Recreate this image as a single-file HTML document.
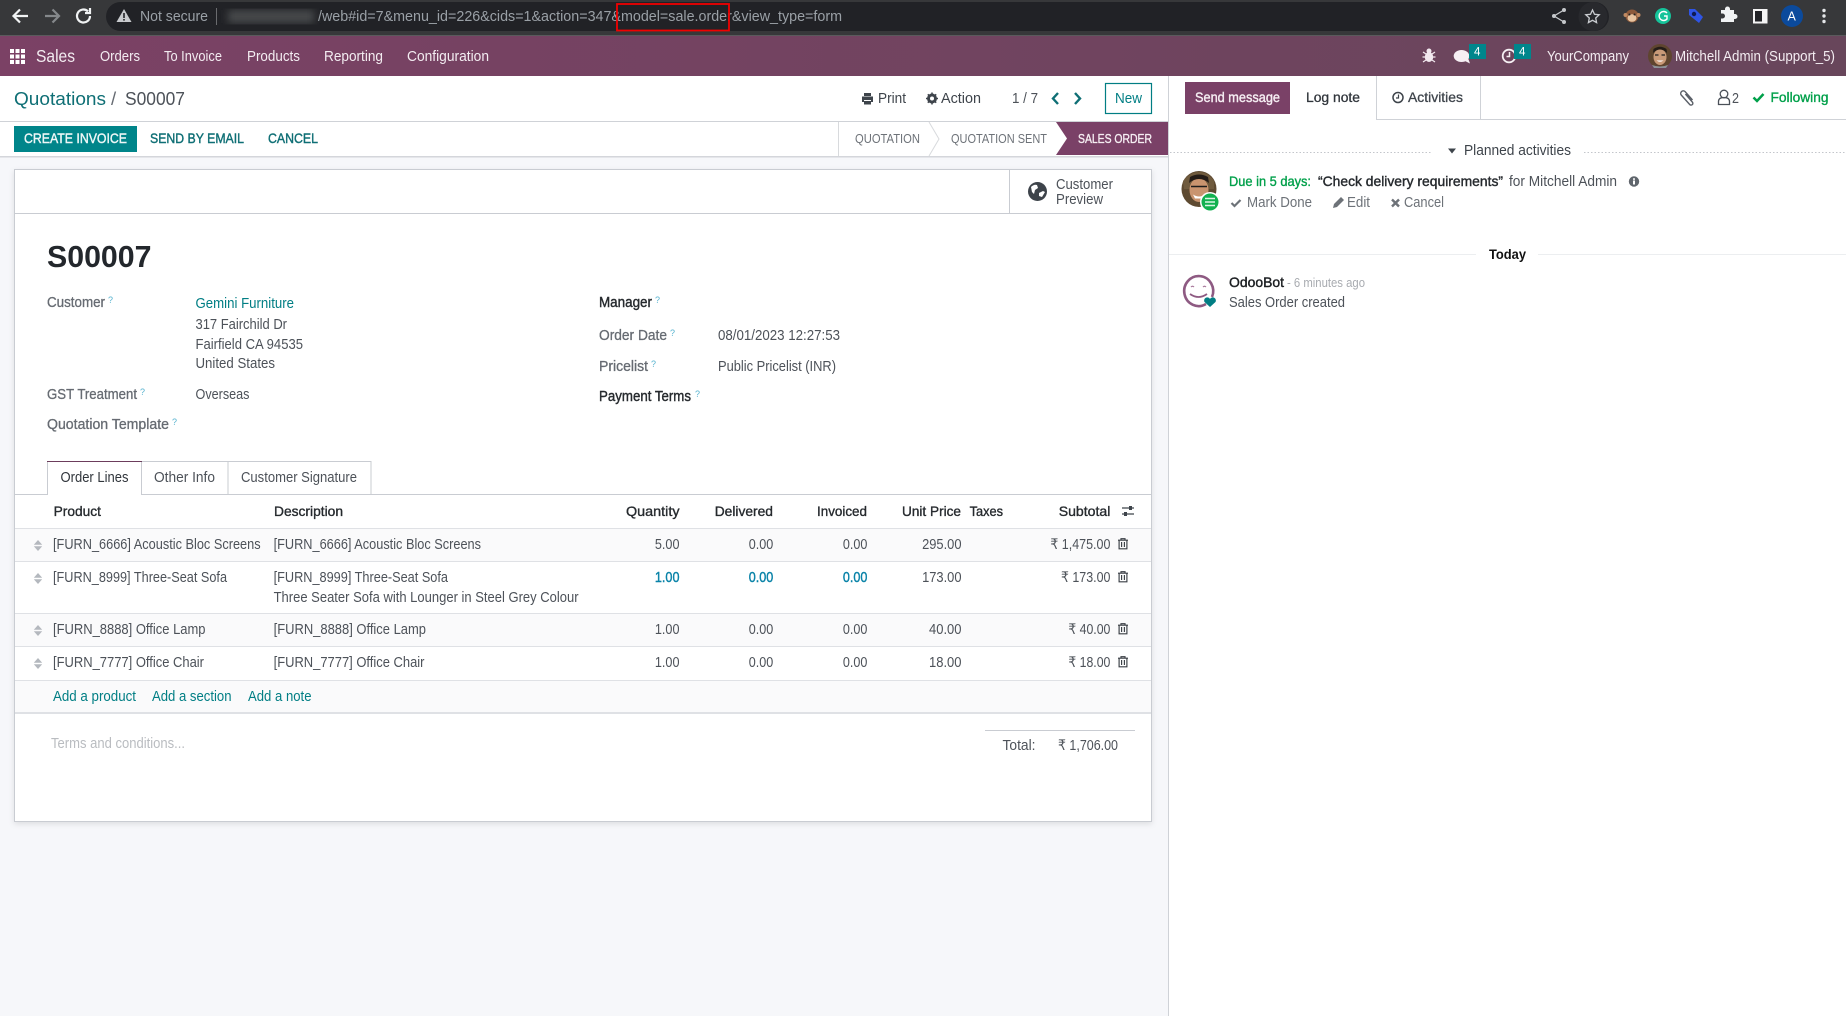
<!DOCTYPE html>
<html lang="en"><head><meta charset="utf-8"><title>S00007 - Odoo</title>
<style>
html,body{margin:0;padding:0;background:#fff;width:1846px;height:1016px;overflow:hidden}
svg{display:block}
text{font-family:"Liberation Sans",sans-serif;font-size:14.5px;fill:#4d5259;white-space:pre}
.b{fill:#262a2e;stroke:#262a2e;stroke-width:.4px}
.l{fill:#666b72;stroke:#666b72;stroke-width:.3px}
.m{fill:#f3ecf1}
.t{fill:#017e84}
.c{fill:#9aa0a6;font-size:15px}
.q{fill:#57b3cf;font-size:9px}
.h{fill:#262a2e;stroke:#262a2e;stroke-width:.35px;font-size:14px}
.md{font-size:14px;stroke-width:.4px}
</style></head><body>
<svg xmlns="http://www.w3.org/2000/svg" width="1846" height="1016" viewBox="0 0 1846 1016">
<defs>
<linearGradient id="nav" x1="0" x2="1" y1="0" y2="0"><stop offset="0" stop-color="#7b4165"/><stop offset="1" stop-color="#68465b"/></linearGradient>
<filter id="bl"><feGaussianBlur stdDeviation="4"/></filter>
<g id="tr"><path d="M-5-3.800h10M-2-3.800v-1.500h4v1.500M-3.900-3.800v8.600h7.800v-8.600M-1.400-2v5M1.400-2v5" fill="none" stroke="#3a3f45" stroke-width="1.150"/></g>
<g id="hn"><path d="M-4.200-.7L0-5.500 4.200-.7zM-4.200.7L0 5.500 4.200.7z" fill="#b4b8be"/></g>
</defs>

<!-- page backgrounds -->
<rect width="1846" height="1016" fill="#fff"/>
<rect x="0" y="157" width="1168" height="859" fill="#f6f7fa"/>

<!-- browser chrome -->
<rect width="1846" height="36" fill="#37383a"/>
<rect y="35" width="1846" height="1" fill="#5a5a5c"/>
<rect x="106" y="2" width="1503" height="29" rx="14.500" fill="#212226"/>
<circle cx="1593" cy="16.500" r="14.500" fill="#28292d"/>
<path d="M28 16H14M20 9.500L13.500 16l6.500 6.500" fill="none" stroke="#f1f3f4" stroke-width="2.200"/>
<path d="M59 16H45M52.500 9.500L59 16l-6.500 6.500" fill="none" stroke="#85888b" stroke-width="2.200"/>
<path d="M90 16a6.500 6.500 0 1 1-2-4.700M90 8v5h-5" fill="none" stroke="#f1f3f4" stroke-width="2.200"/>
<path d="M124 9l7.500 13h-15z" fill="#c8cacd"/><rect x="123.200" y="13" width="1.600" height="5" fill="#212226"/><rect x="123.200" y="19" width="1.600" height="1.600" fill="#212226"/>
<text class="c" x="140" y="21" textLength="68" lengthAdjust="spacingAndGlyphs">Not secure</text>
<rect x="216" y="8" width="1" height="17" fill="#6a6b6e"/>
<rect x="228" y="10" width="86" height="13" fill="#47484c" filter="url(#bl)"/>
<text class="c" x="318" y="21" textLength="524" lengthAdjust="spacingAndGlyphs">/web#id=7&amp;menu_id=226&amp;cids=1&amp;action=347&amp;model=sale.order&amp;view_type=form</text>
<rect x="617" y="4" width="112" height="26.500" fill="none" stroke="#f00000" stroke-width="1.800"/>
<!-- chrome right icons -->
<g fill="none" stroke="#c4c7ca" stroke-width="1.300"><path d="M1564 10l-10 6 10 6"/></g>
<circle cx="1564" cy="10" r="2" fill="#c4c7ca"/><circle cx="1554" cy="16" r="2" fill="#c4c7ca"/><circle cx="1564" cy="22" r="2" fill="#c4c7ca"/>
<path d="M1592.500 10l2 4.300 4.700.5-3.500 3.200.9 4.600-4.100-2.300-4.100 2.300.9-4.600-3.500-3.200 4.700-.5z" fill="none" stroke="#c9ccd0" stroke-width="1.300"/>
<circle cx="1632" cy="16" r="6.500" fill="#8d5a3b"/><circle cx="1625.500" cy="15" r="2" fill="#c08a62"/><circle cx="1638.500" cy="15" r="2" fill="#c08a62"/><ellipse cx="1632" cy="18" rx="4.500" ry="3.800" fill="#e8c4a0"/><circle cx="1629.500" cy="14.500" r="1" fill="#222"/><circle cx="1634.500" cy="14.500" r="1" fill="#222"/>
<circle cx="1663" cy="16" r="8" fill="#15c39a"/><path d="M1667 13a4.500 4.500 0 1 0 0 6v-3h-3" fill="none" stroke="#fff" stroke-width="1.400"/>
<path d="M1689 9h6l8 8-4 6-10-8z" fill="#2f55e6"/><circle cx="1694" cy="14" r="2.200" fill="#0d1b55"/>
<path d="M1721 13h4v-1a2.500 2.500 0 0 1 5 0v1h4v4h1a2.500 2.500 0 0 1 0 5h-1v3h-13v-3.500h1.500a2.500 2.500 0 0 0 0-5H1721z" fill="#f1f3f4" transform="translate(0 -3)"/>
<rect x="1754" y="10" width="12.500" height="12.500" fill="#212226" stroke="#f4f4f4" stroke-width="2"/><rect x="1762" y="9" width="5.500" height="14.500" fill="#f4f4f4"/>
<circle cx="1792" cy="16" r="11" fill="#0b4a9c"/><text x="1787.500" y="20.500" style="fill:#fff;font-size:12.500px">A</text>
<circle cx="1824" cy="10.500" r="1.700" fill="#e5e7e9"/><circle cx="1824" cy="16" r="1.700" fill="#e5e7e9"/><circle cx="1824" cy="21.500" r="1.700" fill="#e5e7e9"/>

<!-- navbar -->
<rect y="36" width="1846" height="40" fill="url(#nav)"/>
<g fill="#fff"><rect x="10" y="49" width="4" height="4"/><rect x="15.500" y="49" width="4" height="4"/><rect x="21" y="49" width="4" height="4"/><rect x="10" y="54.500" width="4" height="4"/><rect x="15.500" y="54.500" width="4" height="4"/><rect x="21" y="54.500" width="4" height="4"/><rect x="10" y="60" width="4" height="4"/><rect x="15.500" y="60" width="4" height="4"/><rect x="21" y="60" width="4" height="4"/></g>
<text class="m" x="36" y="62" style="font-size:17.500px" textLength="39" lengthAdjust="spacingAndGlyphs">Sales</text>
<text class="m" x="100" y="61" textLength="40" lengthAdjust="spacingAndGlyphs">Orders</text>
<text class="m" x="164" y="61" textLength="58" lengthAdjust="spacingAndGlyphs">To Invoice</text>
<text class="m" x="247" y="61" textLength="53" lengthAdjust="spacingAndGlyphs">Products</text>
<text class="m" x="324" y="61" textLength="59" lengthAdjust="spacingAndGlyphs">Reporting</text>
<text class="m" x="407" y="61" textLength="82" lengthAdjust="spacingAndGlyphs">Configuration</text>
<!-- bug -->
<ellipse cx="1429" cy="57" rx="4.200" ry="5" fill="#f2e9ef"/><circle cx="1429" cy="51" r="2.500" fill="#f2e9ef"/>
<path d="M1423 52l3 2M1435 52l-3 2M1422.500 57h3M1435.500 57h-3M1423 62l3-2M1435 62l-3-2" stroke="#f2e9ef" stroke-width="1.200"/>
<!-- chat -->
<ellipse cx="1461.500" cy="56" rx="7.800" ry="6" fill="#f6f0f4"/><path d="M1463 60l7 3.500-2-5.500z" fill="#f6f0f4"/>
<rect x="1469" y="44" width="17" height="15" fill="#00868c"/><text x="1474" y="55.500" style="fill:#fff;font-size:11.500px">4</text>
<!-- clock -->
<circle cx="1509" cy="56" r="6.300" fill="none" stroke="#f6f0f4" stroke-width="1.800"/><path d="M1509.500 52v4.500h-3" fill="none" stroke="#f6f0f4" stroke-width="1.500"/>
<rect x="1514" y="44" width="17" height="15" fill="#00868c"/><text x="1519" y="55.500" style="fill:#fff;font-size:11.500px">4</text>
<text class="m" x="1547" y="61" textLength="82" lengthAdjust="spacingAndGlyphs">YourCompany</text>
<!-- nav avatar -->
<circle cx="1660" cy="56" r="12" fill="#5f452f"/><ellipse cx="1660" cy="57" rx="6.500" ry="8" fill="#c99a78"/><path d="M1653 53q7-7 14 0l-.5-4q-6.500-4.500-13 0z" fill="#241c17"/><path d="M1655 55h3.500M1661.500 55h3.500" stroke="#222" stroke-width="1.300"/><path d="M1656.500 60.500q3.500 2.500 7 0" fill="#fff"/><path d="M1652 65q8 3 16 0l-2 3h-12z" fill="#8d9298"/>
<text class="m" x="1675" y="61" textLength="160" lengthAdjust="spacingAndGlyphs">Mitchell Admin (Support_5)</text>

<!-- control panel left -->
<rect y="121" width="1168" height="1" fill="#cfd2d7"/>
<text class="t" x="14" y="105" style="font-size:18.500px;fill:#0f6f75" textLength="92" lengthAdjust="spacingAndGlyphs">Quotations</text>
<text x="111" y="105" style="font-size:18.500px;fill:#666b72">/</text>
<text x="125" y="105" style="font-size:18.500px" textLength="60" lengthAdjust="spacingAndGlyphs">S00007</text>
<path d="M864 93h7v3h-7zM862 96.500h11v5.500h-2v-2h-7v2h-2zM864 101h7v3.500h-7z" fill="#3e444b"/>
<text x="878" y="103" style="fill:#3e444b" textLength="28" lengthAdjust="spacingAndGlyphs">Print</text>
<circle cx="932" cy="98.500" r="3.500" fill="none" stroke="#3e444b" stroke-width="3"/><path d="M932 92.500v2.500M932 102v2.500M926 98.500h2.500M935.500 98.500h2.500M927.800 94.300l1.700 1.700M934.500 101l1.700 1.700M936.200 94.300l-1.700 1.700M929.500 101l-1.700 1.700" stroke="#3e444b" stroke-width="1.500"/>
<text x="941" y="103" style="fill:#3e444b" textLength="40" lengthAdjust="spacingAndGlyphs">Action</text>
<text x="1012" y="103" textLength="26" lengthAdjust="spacingAndGlyphs">1 / 7</text>
<path d="M1058 93l-5 5.500 5 5.500" fill="none" stroke="#0f6f75" stroke-width="2.400"/>
<path d="M1075 93l5 5.500-5 5.500" fill="none" stroke="#0f6f75" stroke-width="2.400"/>
<rect x="1105.500" y="83.500" width="46" height="30" fill="#fff" stroke="#017e84" stroke-width="1.200"/>
<text class="t" x="1115" y="103" textLength="27" lengthAdjust="spacingAndGlyphs">New</text>

<!-- status bar -->
<rect y="156" width="1168" height="1.500" fill="#d4d6db"/>
<rect x="14" y="126" width="123" height="26" fill="#00858a"/>
<text x="24" y="143" style="font-size:13.500px;fill:#eef7f7;stroke:#eef7f7;stroke-width:.4px" textLength="103" lengthAdjust="spacingAndGlyphs">CREATE INVOICE</text>
<text x="150" y="143" style="font-size:13.500px;fill:#0f6f75;stroke:#0f6f75;stroke-width:.4px" textLength="94" lengthAdjust="spacingAndGlyphs">SEND BY EMAIL</text>
<text x="268" y="143" style="font-size:13.500px;fill:#0f6f75;stroke:#0f6f75;stroke-width:.4px" textLength="50" lengthAdjust="spacingAndGlyphs">CANCEL</text>
<rect x="838" y="122" width="1" height="34" fill="#d8dadd"/>
<text x="855" y="143" style="font-size:13px;fill:#6d7278" textLength="65" lengthAdjust="spacingAndGlyphs">QUOTATION</text>
<path d="M929 122l10 17-10 17" fill="none" stroke="#d8dadd"/>
<text x="951" y="143" style="font-size:13px;fill:#6d7278" textLength="96" lengthAdjust="spacingAndGlyphs">QUOTATION SENT</text>
<path d="M1056 122h112v33h-112l11-16.500z" fill="#7a4167"/>
<text x="1078" y="143" style="font-size:13px;fill:#f6eef3;stroke:#f6eef3;stroke-width:.35px" textLength="74" lengthAdjust="spacingAndGlyphs">SALES ORDER</text>

<!-- sheet -->
<rect x="14.500" y="169.500" width="1137" height="652" fill="#fff" stroke="#c9ccd2" style="filter:drop-shadow(0 2px 3px rgba(0,0,0,.10))"/>
<rect x="15" y="213" width="1136" height="1" fill="#c9ccd2"/>
<rect x="1009" y="170" width="1" height="43" fill="#c9ccd2"/>
<circle cx="1037.500" cy="191.500" r="9.500" fill="#3d434a"/>
<path d="M1031 187q3-3 6-2l1 3-3 2-1 4-2-2zM1039 193l4-2 2 1-3 5-3-1z" fill="#fff"/>
<text x="1056" y="189" textLength="57" lengthAdjust="spacingAndGlyphs">Customer</text>
<text x="1056" y="204" textLength="47" lengthAdjust="spacingAndGlyphs">Preview</text>

<text x="47" y="267" style="font-size:31px;font-weight:700;fill:#23272c" textLength="104.500" lengthAdjust="spacingAndGlyphs">S00007</text>

<text class="l" x="47" y="307" textLength="58" lengthAdjust="spacingAndGlyphs">Customer</text><text class="q" x="108" y="303">?</text>
<text class="t" x="195.500" y="308" textLength="98.500" lengthAdjust="spacingAndGlyphs">Gemini Furniture</text>
<text x="195.500" y="329" textLength="91.500" lengthAdjust="spacingAndGlyphs">317 Fairchild Dr</text>
<text x="195.500" y="349" textLength="107.500" lengthAdjust="spacingAndGlyphs">Fairfield CA 94535</text>
<text x="195.500" y="368" textLength="79.500" lengthAdjust="spacingAndGlyphs">United States</text>
<text class="l" x="47" y="399" textLength="90" lengthAdjust="spacingAndGlyphs">GST Treatment</text><text class="q" x="140" y="395">?</text>
<text x="195.500" y="399" textLength="54" lengthAdjust="spacingAndGlyphs">Overseas</text>
<text class="l" x="47" y="429" textLength="122" lengthAdjust="spacingAndGlyphs">Quotation Template</text><text class="q" x="172" y="425">?</text>

<text class="b" x="599" y="307" textLength="53" lengthAdjust="spacingAndGlyphs">Manager</text><text class="q" x="655" y="303">?</text>
<text class="l" x="599" y="340" textLength="68" lengthAdjust="spacingAndGlyphs">Order Date</text><text class="q" x="670" y="336">?</text>
<text x="718" y="340" textLength="122" lengthAdjust="spacingAndGlyphs">08/01/2023 12:27:53</text>
<text class="l" x="599" y="371" textLength="49" lengthAdjust="spacingAndGlyphs">Pricelist</text><text class="q" x="651" y="367">?</text>
<text x="718" y="371" textLength="118" lengthAdjust="spacingAndGlyphs">Public Pricelist (INR)</text>
<text class="b" x="599" y="401" textLength="92" lengthAdjust="spacingAndGlyphs">Payment Terms</text><text class="q" x="695" y="397">?</text>

<!-- tabs -->
<rect x="15" y="494" width="1136" height="1" fill="#c9ccd2"/>
<rect x="141.500" y="461.500" width="86.500" height="33" fill="#fff" stroke="#c9ccd2"/>
<rect x="228" y="461.500" width="143" height="33" fill="#fff" stroke="#c9ccd2"/>
<path d="M47.500 495V461.500H141.500V495" fill="#fff" stroke="#c9ccd2"/>
<rect x="47" y="461" width="95" height="1" fill="#6c3d5c"/>
<text x="60.500" y="482" style="fill:#31363c" textLength="68" lengthAdjust="spacingAndGlyphs">Order Lines</text>
<text x="154" y="482" textLength="61" lengthAdjust="spacingAndGlyphs">Other Info</text>
<text x="241" y="482" textLength="116" lengthAdjust="spacingAndGlyphs">Customer Signature</text>

<!-- table -->
<rect x="15" y="529" width="1136" height="32" fill="#fafafb"/>
<rect x="15" y="614" width="1136" height="32" fill="#fafafb"/>
<rect x="15" y="681" width="1136" height="31" fill="#fafafb"/>
<g fill="#dfe1e5"><rect x="15" y="528" width="1136" height="1"/><rect x="15" y="561" width="1136" height="1"/><rect x="15" y="613" width="1136" height="1"/><rect x="15" y="646" width="1136" height="1"/><rect x="15" y="680" width="1136" height="1"/><rect x="15" y="712" width="1136" height="2"/></g>

<text class="h" x="53.600" y="516" textLength="47.400" lengthAdjust="spacingAndGlyphs">Product</text>
<text class="h" x="274" y="516" textLength="69" lengthAdjust="spacingAndGlyphs">Description</text>
<text class="h" x="626" y="516" textLength="53.500" lengthAdjust="spacingAndGlyphs">Quantity</text>
<text class="h" x="714.700" y="516" textLength="58.300" lengthAdjust="spacingAndGlyphs">Delivered</text>
<text class="h" x="817" y="516" textLength="50" lengthAdjust="spacingAndGlyphs">Invoiced</text>
<text class="h" x="902" y="516" textLength="59" lengthAdjust="spacingAndGlyphs">Unit Price</text>
<text class="h" x="969.600" y="516" textLength="33.400" lengthAdjust="spacingAndGlyphs">Taxes</text>
<text class="h" x="1058.700" y="516" textLength="51.700" lengthAdjust="spacingAndGlyphs">Subtotal</text>
<path d="M1122 508h12M1122 514h12" stroke="#3e444b" stroke-width="1.300"/><rect x="1129" y="506" width="3" height="4" fill="#3e444b"/><rect x="1124" y="512" width="3" height="4" fill="#3e444b"/>

<use href="#hn" x="38" y="545.500"/><use href="#hn" x="38" y="578.500"/><use href="#hn" x="38" y="630.500"/><use href="#hn" x="38" y="663.500"/>

<text x="53" y="549" textLength="207.600" lengthAdjust="spacingAndGlyphs">[FURN_6666] Acoustic Bloc Screens</text>
<text x="273.600" y="549" textLength="207.400" lengthAdjust="spacingAndGlyphs">[FURN_6666] Acoustic Bloc Screens</text>
<text x="654.900" y="549" textLength="24.600" lengthAdjust="spacingAndGlyphs">5.00</text>
<text x="748.800" y="549" textLength="24.500" lengthAdjust="spacingAndGlyphs">0.00</text>
<text x="842.900" y="549" textLength="24.500" lengthAdjust="spacingAndGlyphs">0.00</text>
<text x="922.100" y="549" textLength="39.400" lengthAdjust="spacingAndGlyphs">295.00</text>
<text x="1050.400" y="549" textLength="60" lengthAdjust="spacingAndGlyphs">₹ 1,475.00</text>
<use href="#tr" x="1123" y="544"/>

<text x="53" y="582" textLength="174" lengthAdjust="spacingAndGlyphs">[FURN_8999] Three-Seat Sofa</text>
<text x="273.600" y="582" textLength="174.400" lengthAdjust="spacingAndGlyphs">[FURN_8999] Three-Seat Sofa</text>
<text x="273.600" y="602" textLength="305" lengthAdjust="spacingAndGlyphs">Three Seater Sofa with Lounger in Steel Grey Colour</text>
<text x="654.900" y="582" style="fill:#0a83a8;stroke:#0a83a8;stroke-width:.4px" textLength="24.600" lengthAdjust="spacingAndGlyphs">1.00</text>
<text x="748.800" y="582" style="fill:#0a83a8;stroke:#0a83a8;stroke-width:.4px" textLength="24.500" lengthAdjust="spacingAndGlyphs">0.00</text>
<text x="842.900" y="582" style="fill:#0a83a8;stroke:#0a83a8;stroke-width:.4px" textLength="24.500" lengthAdjust="spacingAndGlyphs">0.00</text>
<text x="922.100" y="582" textLength="39.400" lengthAdjust="spacingAndGlyphs">173.00</text>
<text x="1061" y="582" textLength="49.400" lengthAdjust="spacingAndGlyphs">₹ 173.00</text>
<use href="#tr" x="1123" y="577"/>

<text x="53" y="634" textLength="152.500" lengthAdjust="spacingAndGlyphs">[FURN_8888] Office Lamp</text>
<text x="273.600" y="634" textLength="152.400" lengthAdjust="spacingAndGlyphs">[FURN_8888] Office Lamp</text>
<text x="654.900" y="634" textLength="24.600" lengthAdjust="spacingAndGlyphs">1.00</text>
<text x="748.800" y="634" textLength="24.500" lengthAdjust="spacingAndGlyphs">0.00</text>
<text x="842.900" y="634" textLength="24.500" lengthAdjust="spacingAndGlyphs">0.00</text>
<text x="929" y="634" textLength="32.500" lengthAdjust="spacingAndGlyphs">40.00</text>
<text x="1068.400" y="634" textLength="42" lengthAdjust="spacingAndGlyphs">₹ 40.00</text>
<use href="#tr" x="1123" y="629"/>

<text x="53" y="667" textLength="151" lengthAdjust="spacingAndGlyphs">[FURN_7777] Office Chair</text>
<text x="273.600" y="667" textLength="150.900" lengthAdjust="spacingAndGlyphs">[FURN_7777] Office Chair</text>
<text x="654.900" y="667" textLength="24.600" lengthAdjust="spacingAndGlyphs">1.00</text>
<text x="748.800" y="667" textLength="24.500" lengthAdjust="spacingAndGlyphs">0.00</text>
<text x="842.900" y="667" textLength="24.500" lengthAdjust="spacingAndGlyphs">0.00</text>
<text x="929" y="667" textLength="32.500" lengthAdjust="spacingAndGlyphs">18.00</text>
<text x="1068.400" y="667" textLength="42" lengthAdjust="spacingAndGlyphs">₹ 18.00</text>
<use href="#tr" x="1123" y="662"/>

<text class="t" x="53" y="701" textLength="83" lengthAdjust="spacingAndGlyphs">Add a product</text>
<text class="t" x="152" y="701" textLength="79.500" lengthAdjust="spacingAndGlyphs">Add a section</text>
<text class="t" x="248" y="701" textLength="63.500" lengthAdjust="spacingAndGlyphs">Add a note</text>

<text x="51" y="748" style="fill:#b9bcc0" textLength="134" lengthAdjust="spacingAndGlyphs">Terms and conditions...</text>
<rect x="985" y="730" width="150" height="1" fill="#c9ccd2"/>
<text x="1002.500" y="750" textLength="33" lengthAdjust="spacingAndGlyphs">Total:</text>
<text x="1058" y="750" textLength="60" lengthAdjust="spacingAndGlyphs">₹ 1,706.00</text>

<!-- chatter -->
<rect x="1168" y="76" width="1" height="940" fill="#cfd2d7"/>
<rect x="1185" y="82" width="105" height="32" fill="#7a4167"/>
<text x="1195" y="102" class="md" style="fill:#f6eef3;stroke:#f6eef3" textLength="85" lengthAdjust="spacingAndGlyphs">Send message</text>
<text x="1306" y="102" class="md" style="fill:#31363c;stroke:#31363c;stroke-width:.3px" textLength="54" lengthAdjust="spacingAndGlyphs">Log note</text>
<path d="M1376.500 76v43M1480.500 76v43" stroke="#cfd2d7"/>
<rect x="1169" y="119" width="677" height="1" fill="#cfd2d7"/>
<rect x="1169" y="119" width="207" height="1" fill="#fff"/>
<circle cx="1398" cy="97.500" r="5" fill="none" stroke="#3e444b" stroke-width="1.500"/><path d="M1398.500 94.500v3.500h-2.500" fill="none" stroke="#3e444b" stroke-width="1.200"/>
<text x="1408" y="102" class="md" style="fill:#3e444b;stroke:#3e444b;stroke-width:.3px" textLength="55" lengthAdjust="spacingAndGlyphs">Activities</text>
<path d="M1692.500 101l-7.500-8.500a2.600 2.600 0 0 0-3.800 3.500l8.500 9.500a1.800 1.800 0 0 0 2.700-2.400l-7-8" fill="none" stroke="#5b6068" stroke-width="1.400" transform="translate(0 -1)"/>
<circle cx="1724" cy="94" r="3.800" fill="none" stroke="#4a5058" stroke-width="1.300"/><path d="M1718.500 104.500v-3q0-4 5.500-4t5.500 4v3z" fill="none" stroke="#4a5058" stroke-width="1.300"/>
<text x="1732" y="103" textLength="7" lengthAdjust="spacingAndGlyphs">2</text>
<path d="M1753.500 97.500l3.500 3.500 6.500-7" fill="none" stroke="#00a04a" stroke-width="2.500"/>
<text x="1770.500" y="102" class="md" style="fill:#00a04a;stroke:#00a04a;stroke-width:.35px" textLength="58" lengthAdjust="spacingAndGlyphs">Following</text>

<path d="M1170 152.500h261M1584 152.500h262" stroke="#c3c6cb" stroke-dasharray="1.500 2"/>
<path d="M1448 148.500h8l-4 5z" fill="#3e444b"/>
<text x="1464" y="155" style="fill:#3e444b" textLength="107" lengthAdjust="spacingAndGlyphs">Planned activities</text>

<!-- activity avatar -->
<ellipse cx="1199" cy="189" rx="17.500" ry="18" fill="#5e4a31"/>
<path d="M1183 181q7-9 16-9t15 9v8h-30z" fill="#6f5a3d"/>
<ellipse cx="1199" cy="190" rx="9.500" ry="12" fill="#c9946f"/>
<path d="M1189 183q10-8 20 0l-1-6q-9-5-18 0z" fill="#241c17"/>
<path d="M1191 186.500h6M1201 186.500h6M1197 186.500h4" stroke="#1d1d1d" stroke-width="1.500"/><path d="M1193 194.500q6 4 12 0l-2 4h-8z" fill="#fff"/>
<circle cx="1210" cy="202" r="10" fill="#fff"/><circle cx="1210" cy="202" r="8.500" fill="#12b150"/><path d="M1205 198.500h10M1205 202h10M1205 205.500h10" stroke="#d8f5e3" stroke-width="1.500"/>
<text x="1229" y="186" class="md" style="fill:#00a04a;stroke:#00a04a;stroke-width:.35px" textLength="82" lengthAdjust="spacingAndGlyphs">Due in 5 days:</text>
<text x="1318" y="186" class="md" style="fill:#262a2e;stroke:#262a2e" textLength="185" lengthAdjust="spacingAndGlyphs">“Check delivery requirements”</text>
<text x="1509" y="186" textLength="108" lengthAdjust="spacingAndGlyphs">for Mitchell Admin</text>
<circle cx="1634" cy="181.500" r="5.200" fill="#5f656c"/><rect x="1633" y="180.500" width="2" height="4" fill="#fff"/><rect x="1633" y="178.300" width="2" height="1.500" fill="#fff"/>
<path d="M1231.500 203l3 3 6-6" fill="none" stroke="#6d7278" stroke-width="2.200"/>
<text x="1247" y="207" style="fill:#6d7278" textLength="65" lengthAdjust="spacingAndGlyphs">Mark Done</text>
<path d="M1333 208l1-4 7-7 3 3-7 7z" fill="#6d7278"/>
<text x="1347" y="207" style="fill:#6d7278" textLength="23" lengthAdjust="spacingAndGlyphs">Edit</text>
<path d="M1392 199.500l7 7M1399 199.500l-7 7" stroke="#6d7278" stroke-width="2.400"/>
<text x="1404" y="207" style="fill:#6d7278" textLength="40" lengthAdjust="spacingAndGlyphs">Cancel</text>

<path d="M1169 254.500h307M1538 254.500h308" stroke="#eceef0"/>
<text x="1489" y="259" style="font-weight:700;fill:#111;font-size:14px" textLength="37" lengthAdjust="spacingAndGlyphs">Today</text>

<!-- OdooBot -->
<path d="M1206 304a14.500 15 0 1 1 6-7" fill="none" stroke="#8e5a82" stroke-width="2.600"/>
<path d="M1191 287q1.500-1.500 3 0M1203 287q1.500-1.500 3 0" fill="none" stroke="#a9799c" stroke-width="1.200"/>
<path d="M1190 294q8.500 6 17 0" fill="none" stroke="#8e5a82" stroke-width="1.800"/>
<path d="M1210 307l-5.500-5a3 3 0 0 1 5.500-3 3 3 0 0 1 5.500 3z" fill="#017e84"/>
<text x="1229" y="287" class="md" style="fill:#1c1f22;stroke:#1c1f22" textLength="55" lengthAdjust="spacingAndGlyphs">OdooBot</text>
<text x="1287" y="287" style="font-size:12.500px;fill:#a8abb0" textLength="78" lengthAdjust="spacingAndGlyphs">- 6 minutes ago</text>
<text x="1229" y="307" textLength="116" lengthAdjust="spacingAndGlyphs">Sales Order created</text>
</svg>
</body></html>
